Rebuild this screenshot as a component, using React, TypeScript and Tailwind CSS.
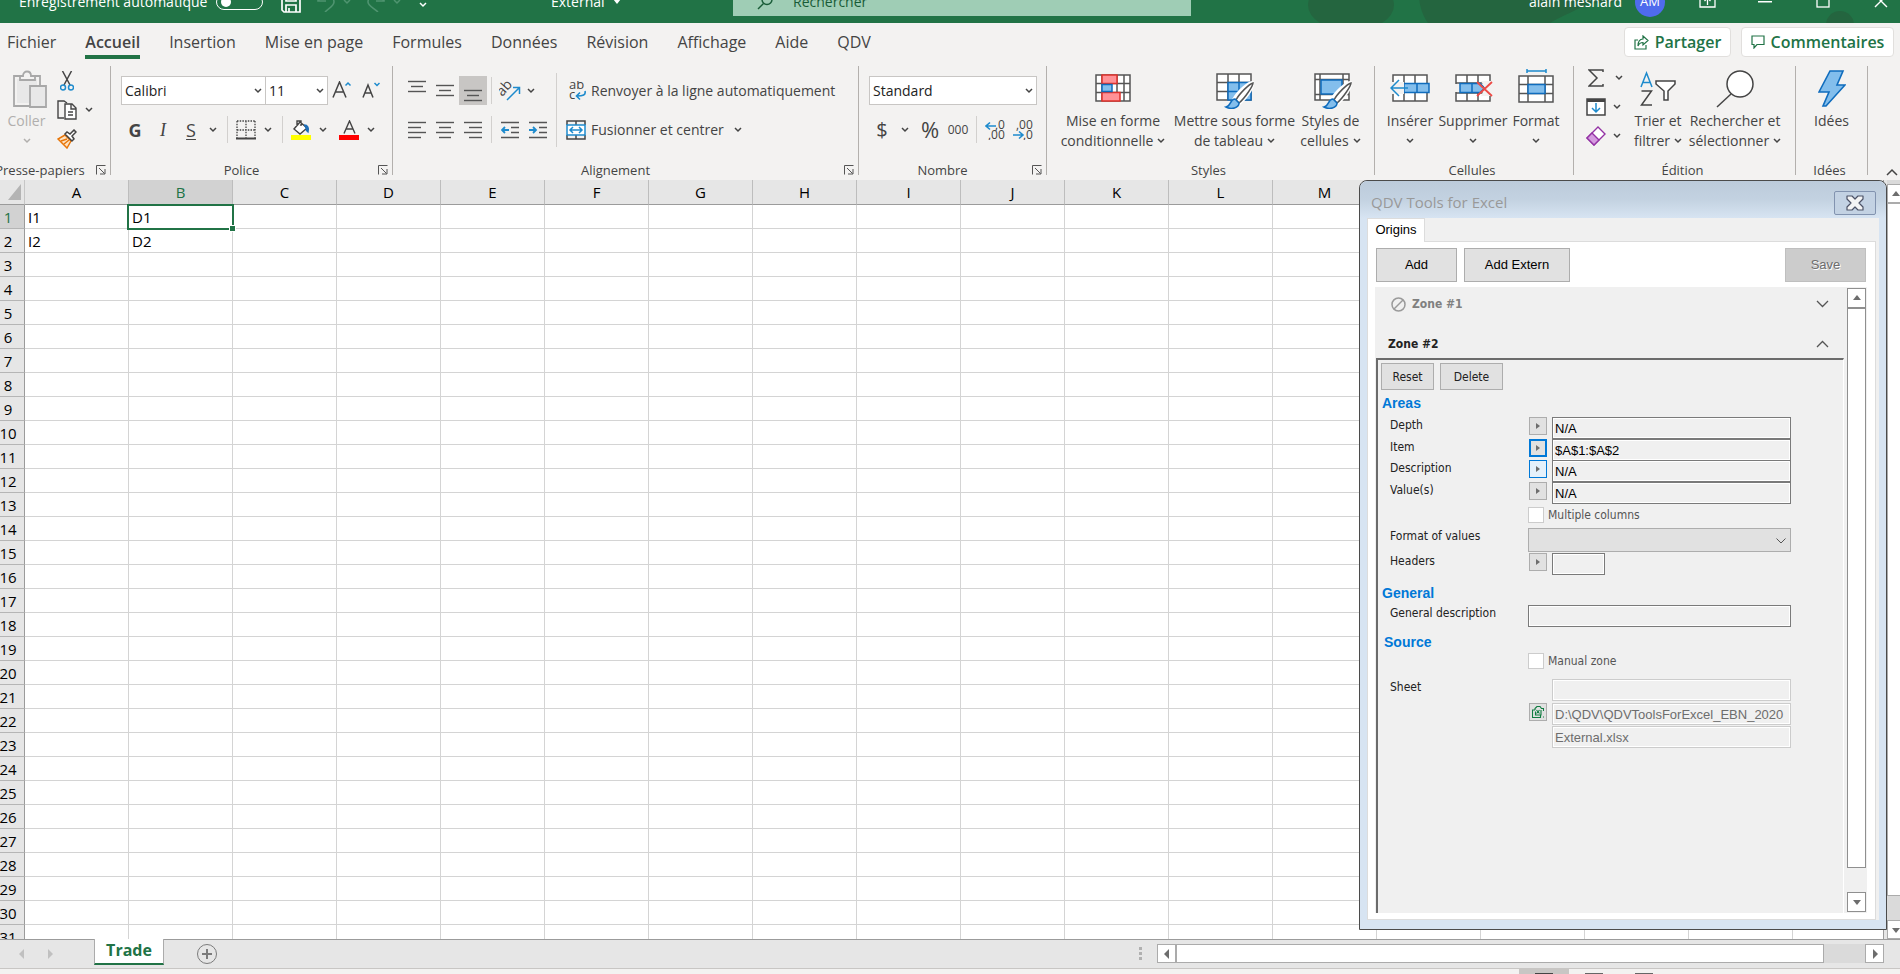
import { useState, type ReactNode } from 'react';
import clsx from 'clsx';

const COLUMNS = 'ABCDEFGHIJKLMNOPQR'.split('');
const ROWS = Array.from({ length: 31 }, (_, i) => i + 1);
const CELLS: Record<string, string> = { A1: 'I1', B1: 'D1', A2: 'I2', B2: 'D2' };
const TABS = [
  'Fichier',
  'Accueil',
  'Insertion',
  'Mise en page',
  'Formules',
  'Données',
  'Révision',
  'Affichage',
  'Aide',
  'QDV',
];

/* ---------- small building blocks ---------- */

function Chevron({ className = 'text-[#444]' }: { className?: string }) {
  return (
    <svg width="8" height="6" viewBox="0 0 8 6" fill="none" stroke="currentColor" strokeWidth="1.5" className={clsx('flex-none', className)}>
      <path d="M1 1l3 3 3-3" />
    </svg>
  );
}

function Triangle({ dir, className = 'fill-[#6d6d6d]' }: { dir: 'up' | 'down' | 'left' | 'right'; className?: string }) {
  const paths = { up: 'M5 2l4 5H1z', down: 'M1 3h8L5 8z', left: 'M7 0v10L2 5z', right: 'M3 0v10l5-5z' };
  return (
    <svg width="10" height="10" viewBox="0 0 10 10" className={clsx('flex-none', className)}>
      <path d={paths[dir]} />
    </svg>
  );
}

function Divider({ className = 'h-[27px]' }: { className?: string }) {
  return <div className={clsx('w-px flex-none bg-[#d2d0ce]', className)} />;
}

interface GroupProps {
  title: string;
  width: string;
  launcher?: boolean;
  children: ReactNode;
}

function Group({ title, width, launcher = false, children }: GroupProps) {
  return (
    <>
      <section className={clsx('flex h-[114px] flex-none flex-col', width)}>
        <div className="flex flex-1">{children}</div>
        <div className="flex h-5 items-center gap-[6px] pr-1 text-[13px] leading-4 text-[#444]">
          <span className="flex-1 text-center whitespace-nowrap">{title}</span>
          {launcher && (
            <button type="button" aria-label={title}>
              <svg width="10" height="10" viewBox="0 0 10 10" fill="none" stroke="#555">
                <path d="M.5 9.500V.5h9M3 3l5.500 5.500M9 4v5H4" />
              </svg>
            </button>
          )}
        </div>
      </section>
      <div className="h-[109px] w-px flex-none bg-[#b3b0ad]" />
    </>
  );
}

interface IconButtonProps {
  label: string;
  className?: string;
  children: ReactNode;
}

function IconButton({ label, className = 'h-[27px] w-7', children }: IconButtonProps) {
  return (
    <button type="button" aria-label={label} className={clsx('flex flex-none items-center justify-center', className)}>
      {children}
    </button>
  );
}

interface BigButtonProps {
  icon: ReactNode;
  lines: string[];
  width: string;
  chevron?: boolean;
  disabled?: boolean;
}

function BigButton({ icon, lines, width, chevron = true, disabled = false }: BigButtonProps) {
  return (
    <button
      type="button"
      disabled={disabled}
      className={clsx('flex flex-none flex-col items-center pt-1 text-sm leading-5', width, disabled ? 'text-[#b1afad]' : 'text-[#444]')}
    >
      <span className="mb-[3px] flex h-[38px] items-center">{icon}</span>
      <span className="whitespace-nowrap">{lines[0]}</span>
      <span className="flex min-h-5 items-center gap-1 whitespace-nowrap">
        {lines[1]}
        {chevron && <Chevron className="" />}
      </span>
    </button>
  );
}

interface ComboProps {
  label: string;
  value: string;
  width: string;
}

function Combo({ label, value, width }: ComboProps) {
  return (
    <div className={clsx('relative h-[29px] flex-none', width)}>
      <select aria-label={label} className="h-full w-full appearance-none border border-[#c8c6c4] bg-white pl-[3px] text-sm text-[#222]">
        <option>{value}</option>
      </select>
      <Chevron className="pointer-events-none absolute top-[12px] right-1 text-[#444]" />
    </div>
  );
}

function Lines({ rows, className }: { rows: [number, number][]; className?: string }) {
  return (
    <svg width="18" height="18" viewBox="0 0 18 18" className={clsx('stroke-[#555]', className)} strokeWidth="1.400">
      {rows.map(([x1, x2], i) => (
        <path key={i} d={`M${x1} ${1.5 + i * 5}H${x2}`} />
      ))}
    </svg>
  );
}

/* ---------- title bar ---------- */

function TitleBar() {
  const [autoSave, setAutoSave] = useState(false);
  return (
    <header className="relative -mt-5 flex h-[43px] flex-none items-center overflow-hidden bg-[#217346] text-sm text-white">
      <svg width="600" height="42" viewBox="0 0 600 42" className="absolute right-0 bottom-0 fill-[#24653f]">
        <ellipse cx="51" cy="24" rx="43" ry="26" />
        <path d="M120 0h230c-10 18-40 24-60 22-20 10-30 14-40 20H128C118 28 118 12 120 0z" />
        <circle cx="540" cy="44" r="14" />
      </svg>
      <div className="relative flex w-[733px] flex-none items-center pl-[19px]">
        <label htmlFor="autosave" className="w-[197px] whitespace-nowrap">
          Enregistrement automatique
        </label>
        <span className="relative flex h-4 w-[47px] items-center rounded-full border border-white">
          <input
            id="autosave"
            type="checkbox"
            checked={autoSave}
            onChange={(e) => setAutoSave(e.target.checked)}
            className="absolute inset-0 appearance-none"
          />
          <span className={clsx('h-[10px] w-[10px] rounded-full bg-white', autoSave ? 'ml-[31px]' : 'ml-[4px]')} />
        </span>
        <button type="button" aria-label="Enregistrer" className="mt-[3px] ml-[18px]">
          <svg width="20" height="20" viewBox="0 0 20 20" fill="none" stroke="white" strokeWidth="1.700">
            <path d="M1 1h16l2 2v16H3l-2-2zM5 1v7h10V1M5 19v-7h10v7M8 19v-4" />
          </svg>
        </button>
        <span className="ml-4 flex items-center gap-2 text-[#4f9470]">
          <svg width="18" height="20" viewBox="0 0 18 20" fill="none" stroke="currentColor" strokeWidth="1.600">
            <path d="M1 1v8h8M1 9c6-9 16-5 16 1 0 4-5 6-9 10" />
          </svg>
          <Chevron className="text-[#4f9470]" />
        </span>
        <span className="ml-4 flex items-center gap-2 text-[#4f9470]">
          <svg width="18" height="20" viewBox="0 0 18 20" fill="none" stroke="currentColor" strokeWidth="1.600">
            <path d="M17 1v8H9M17 9C11 0 1 4 1 10c0 4 6 6 10 10" />
          </svg>
          <Chevron className="text-[#4f9470]" />
        </span>
        <Chevron className="mt-[6px] ml-[18px] text-white" />
        <button type="button" className="ml-[124px] flex items-center gap-2">
          External
          <svg width="8" height="5" viewBox="0 0 8 5" className="fill-white">
            <path d="M0 0h8L4 5z" />
          </svg>
        </button>
      </div>
      <div className="relative flex h-[29px] w-[458px] flex-none items-center gap-5 bg-[#9fcdb5] pl-6 text-[#185c37]">
        <svg width="16" height="16" viewBox="0 0 16 16" fill="none" stroke="currentColor" strokeWidth="1.400">
          <circle cx="10" cy="5.500" r="5" />
          <path d="M6.500 9.500L1 15" />
        </svg>
        <input aria-label="Rechercher" placeholder="Rechercher" className="w-80 bg-transparent placeholder:text-[#185c37] outline-none" />
      </div>
      <div className="relative ml-auto flex flex-none items-center">
        <span className="mr-[13px]">alain mesnard</span>
        <span className="mr-[34px] flex h-[30px] w-[30px] items-center justify-center rounded-full bg-[#4f6bed] text-[13px]">AM</span>
        <button type="button" aria-label="Options du ruban" className="mr-[42px]">
          <svg width="17" height="12" viewBox="0 0 17 12" fill="none" stroke="white" strokeWidth="1.300">
            <path d="M1 0v11h15V0M8.500 9V2M5.500 5l3-3 3 3" />
          </svg>
        </button>
        <button type="button" aria-label="Réduire" className="mr-11">
          <svg width="14" height="2" className="fill-white">
            <rect width="14" height="1.500" />
          </svg>
        </button>
        <button type="button" aria-label="Agrandir" className="mr-11">
          <svg width="14" height="12" fill="none" stroke="white" strokeWidth="1.300">
            <rect x="1" y="-2" width="12" height="13" />
          </svg>
        </button>
        <button type="button" aria-label="Fermer" className="mr-3">
          <svg width="14" height="14" fill="none" stroke="white" strokeWidth="1.400">
            <path d="M1 0l12 12M13 0L1 12" />
          </svg>
        </button>
      </div>
    </header>
  );
}

/* ---------- ribbon ---------- */

function RibbonTabs() {
  const [active, setActive] = useState('Accueil');
  return (
    <nav className="flex h-[43px] flex-none items-start justify-between pr-[6px] pl-[7px]">
      <div className="flex gap-[29px]">
        {TABS.map((t) => (
          <button
            key={t}
            type="button"
            onClick={() => setActive(t)}
            className={clsx(
              'h-9 border-b-4 pt-[6px] text-base leading-6 whitespace-nowrap text-[#444]',
              t === active ? 'border-[#217346] font-semibold' : 'border-transparent',
            )}
          >
            {t}
          </button>
        ))}
      </div>
      <div className="flex gap-[10px] pt-1 text-base font-semibold text-[#217346]">
        <button type="button" className="flex h-[30px] w-[107px] items-center justify-center gap-[6px] rounded-sm border border-[#e1dfdd] bg-white">
          <svg width="15" height="15" viewBox="0 0 15 15" fill="none" stroke="currentColor" strokeWidth="1.200">
            <path d="M4 5H1v9h11v-4M9 1l5 4.500L9 10V7.500C6 7.500 5 8.500 4 11c0-4 1.500-7 5-7z" />
          </svg>
          Partager
        </button>
        <button type="button" className="flex h-[30px] w-[153px] items-center justify-center gap-[6px] rounded-sm border border-[#e1dfdd] bg-white">
          <svg width="14" height="14" viewBox="0 0 14 14" fill="none" stroke="currentColor" strokeWidth="1.200">
            <path d="M1 1h12v8.500H6L3 13V9.500H1z" />
          </svg>
          Commentaires
        </button>
      </div>
    </nav>
  );
}

function ClipboardGroup() {
  return (
    <Group title="Presse-papiers" width="-ml-[10px] w-[120px]" launcher>
      <div className="pl-[11px]">
        <BigButton
          disabled
          width="w-[51px]"
          lines={['Coller']}
          icon={
            <svg width="34" height="38" viewBox="0 0 34 38" fill="#e8e8e8" stroke="#a8a8a8" strokeWidth="1.800" className="ml-[6px]">
              <path d="M1 6h26v30H1z" fill="#f3f2f1" />
              <path d="M4 9h20v24H4z" stroke="none" />
              <path d="M7 10V6h3c0-6 8-6 8 0h4v4z" fill="#f3f2f1" />
              <path d="M17 16h16v21H17z" />
            </svg>
          }
        />
      </div>
      <div className="flex flex-col gap-[9px] pt-[5px] pl-[5px]">
        <IconButton label="Couper" className="h-5 w-5">
          <svg width="14" height="20" viewBox="0 0 14 20" fill="none" strokeWidth="1.500">
            <path d="M2.500 0L10 14M11.500 0L4 14" stroke="#444" />
            <circle cx="3" cy="16.500" r="2.500" stroke="#1e8bcd" />
            <circle cx="11" cy="16.500" r="2.500" stroke="#1e8bcd" />
          </svg>
        </IconButton>
        <div className="flex items-center gap-2">
          <IconButton label="Copier" className="h-5 w-5">
            <svg width="20" height="20" viewBox="0 0 20 20" fill="white" stroke="#444" strokeWidth="1.400">
              <path d="M7 18H1V1h6l3 2" fill="none" />
              <path d="M8 4h7l4 4v11H8zM14 4v5h5M11 12h5M11 15h5" />
            </svg>
          </IconButton>
          <Chevron />
        </div>
        <IconButton label="Reproduire la mise en forme" className="h-5 w-5">
          <svg width="20" height="20" viewBox="0 0 20 20" fill="none" strokeWidth="1.500">
            <path d="M8 6l-7 4 9 9 4-7z" fill="#fde3c3" stroke="#e8760a" />
            <path d="M4 12l6-2M7 15l5-4" stroke="#e8760a" />
            <path d="M8 5l7 7 2-2-2-3 4-4-2-2-4 4-3-2z" fill="white" stroke="#444" />
          </svg>
        </IconButton>
      </div>
    </Group>
  );
}

function FontGroup() {
  return (
    <Group title="Police" width="w-[281px]" launcher>
      <div className="flex flex-col gap-[11px] pt-[10px] pl-[10px]">
        <div className="flex items-center">
          <Combo label="Police" value="Calibri" width="w-[145px]" />
          <Combo label="Taille" value="11" width="-ml-px w-[63px]" />
          <IconButton label="Agrandir la police" className="ml-1 h-[27px] w-5">
            <svg width="20" height="20" viewBox="0 0 20 20" fill="none" strokeWidth="1.500">
              <path d="M1 16.500L7.500 1 14 16.500M3.500 11h8" stroke="#444" />
              <path d="M13.500 4.500L16 2 18.500 4.500" stroke="#1e8bcd" />
            </svg>
          </IconButton>
          <IconButton label="Réduire la police" className="ml-[10px] h-[27px] w-[18px]">
            <svg width="18" height="20" viewBox="0 0 18 20" fill="none" strokeWidth="1.500">
              <path d="M1 16.500L6 4l5 12.500M3 12h6" stroke="#444" />
              <path d="M12.500 2L15 4.500 17.500 2" stroke="#1e8bcd" />
            </svg>
          </IconButton>
        </div>
        <div className="flex items-center text-lg leading-6 text-[#444]">
          <IconButton label="Gras">
            <b>G</b>
          </IconButton>
          <IconButton label="Italique">
            <i className="font-['Liberation_Serif',serif]">I</i>
          </IconButton>
          <IconButton label="Souligné">
            <span className="underline underline-offset-2">S</span>
          </IconButton>
          <Chevron className="ml-1 text-[#444]" />
          <Divider className="mr-[6px] ml-[10px] h-[27px]" />
          <IconButton label="Bordures" className="h-[27px] w-6">
            <svg width="20" height="20" viewBox="0 0 20 20" fill="none" stroke="#444" strokeWidth="1.300">
              <path d="M1 1h18M1 10h18M1 1v17M10 1v17M19 1v17" strokeDasharray="1.500 1.200" />
              <path d="M0 18.500h20" strokeWidth="2" />
            </svg>
          </IconButton>
          <Chevron className="ml-[6px] text-[#444]" />
          <Divider className="mr-[6px] ml-[10px] h-[27px]" />
          <IconButton label="Remplissage" className="h-[27px] w-6">
            <svg width="20" height="20" viewBox="0 0 20 20" fill="none" strokeWidth="1.400">
              <path d="M9 2l-6 7 6 5 7-6zM6 6V1h4v5" stroke="#444" fill="white" />
              <path d="M13 5c4 0 5 3 4 7l-2-2" fill="#1e6fb8" stroke="#1e6fb8" />
              <path d="M0 15h20v5H0z" fill="#ffff00" />
            </svg>
          </IconButton>
          <Chevron className="ml-[6px] text-[#444]" />
          <IconButton label="Couleur de police" className="ml-[10px] h-[27px] w-6">
            <svg width="20" height="20" viewBox="0 0 20 20" fill="none" strokeWidth="1.400">
              <path d="M5 13.500L10.500 1 16 13.500M7 9h7" stroke="#444" />
              <path d="M0 15h20v5H0z" fill="#ff0000" />
            </svg>
          </IconButton>
          <Chevron className="ml-[6px] text-[#444]" />
        </div>
      </div>
    </Group>
  );
}

function AlignmentGroup() {
  return (
    <Group title="Alignement" width="w-[465px]" launcher>
      <div className="flex flex-col gap-[11px] pt-[10px] pl-[10px]">
        <div className="flex h-[29px] items-center">
          <IconButton label="Aligner en haut">
            <Lines rows={[[0, 18], [3, 15], [0, 18]]} className="mb-[3px] stroke-[#333]" />
          </IconButton>
          <IconButton label="Aligner au centre">
            <Lines rows={[[0, 18], [3, 15], [0, 18]]} className="mt-1 stroke-[#333]" />
          </IconButton>
          <IconButton label="Aligner en bas" className="h-[29px] w-7 bg-[#c8c6c4]">
            <Lines rows={[[0, 18], [3, 15], [0, 18]]} className="mt-[14px] stroke-[#333]" />
          </IconButton>
          <Divider className="mx-1 h-[27px]" />
          <IconButton label="Orientation">
            <svg width="22" height="22" viewBox="0 0 22 22" fill="none" strokeWidth="1.500">
              <text x="0" y="14" transform="rotate(-48 5 12)" fontSize="14" fill="#444">ab</text>
              <path d="M8 20L20 8M14 7.500h6.500V14" stroke="#1e8bcd" />
            </svg>
          </IconButton>
          <Chevron className="ml-[3px] text-[#444]" />
        </div>
        <div className="flex items-center">
          <IconButton label="Aligner à gauche">
            <Lines rows={[[0, 18], [0, 13], [0, 18], [0, 13]]} />
          </IconButton>
          <IconButton label="Centrer">
            <Lines rows={[[0, 18], [3, 15], [0, 18], [3, 15]]} />
          </IconButton>
          <IconButton label="Aligner à droite">
            <Lines rows={[[0, 18], [5, 18], [0, 18], [5, 18]]} />
          </IconButton>
          <Divider className="mx-1 h-[27px]" />
          <IconButton label="Diminuer le retrait">
            <svg width="18" height="18" viewBox="0 0 18 18" fill="none" stroke="#555" strokeWidth="1.500">
              <path d="M0 1.500h18M10 6.500h8M10 11.500h8M0 16.500h18" />
              <path d="M1 9h7M4 6L1 9l3 3" stroke="#1e8bcd" strokeWidth="1.800" />
            </svg>
          </IconButton>
          <IconButton label="Augmenter le retrait">
            <svg width="18" height="18" viewBox="0 0 18 18" fill="none" stroke="#555" strokeWidth="1.500">
              <path d="M0 1.500h18M10 6.500h8M10 11.500h8M0 16.500h18" />
              <path d="M0 9h7M4 6l3 3-3 3" stroke="#1e8bcd" strokeWidth="1.800" />
            </svg>
          </IconButton>
        </div>
      </div>
      <div className="pt-[7px] pl-1">
        <Divider className="h-[74px]" />
      </div>
      <div className="flex flex-col gap-[11px] pt-[10px] pl-[9px] text-sm text-[#444]">
        <button type="button" className="flex h-[29px] items-center gap-[5px] whitespace-nowrap">
          <svg width="20" height="20" viewBox="0 0 20 20" fill="none" strokeWidth="1.600">
            <text x="3" y="8" fontSize="13" fill="#444">ab</text>
            <text x="3" y="18" fontSize="13" fill="#444">c</text>
            <path d="M19 10c1 4-2 5-8 5M14 11.500L10.500 15l3.500 3.500" stroke="#1e8bcd" />
          </svg>
          Renvoyer à la ligne automatiquement
        </button>
        <button type="button" className="flex h-[27px] items-center gap-[5px] whitespace-nowrap">
          <svg width="20" height="20" viewBox="0 0 20 20" fill="none" stroke="#444" strokeWidth="1.500">
            <path d="M1 5V1h18v4M1 15v4h18v-4M10 1v4M10 15v4" />
            <path d="M1 5h18v10H1z" fill="#fff" stroke="#1e8bcd" />
            <path d="M4 10h12M7 7l-3 3 3 3M13 7l3 3-3 3" stroke="#1e8bcd" />
          </svg>
          <span className="mr-[5px]">Fusionner et centrer</span>
          <Chevron />
        </button>
      </div>
    </Group>
  );
}

function NumberGroup() {
  return (
    <Group title="Nombre" width="w-[187px]" launcher>
      <div className="flex flex-col gap-[11px] pt-[10px] pl-[10px]">
        <Combo label="Format de nombre" value="Standard" width="w-[168px]" />
        <div className="flex items-center text-[#444]">
          <IconButton label="Comptabilité" className="h-[27px] w-[26px] text-xl">$</IconButton>
          <Chevron className="ml-[6px] text-[#444]" />
          <IconButton label="Pourcentage" className="ml-[9px] h-[27px] w-6 text-[22px]">%</IconButton>
          <IconButton label="Séparateur de milliers" className="ml-1 h-[27px] w-6 text-xs">000</IconButton>
          <Divider className="mr-[6px] ml-[6px] h-[27px]" />
          <IconButton label="Ajouter une décimale" className="h-[27px] w-6">
            <svg width="20" height="20" viewBox="0 0 20 20" fill="none" strokeWidth="1.600">
              <text x="10" y="9" fontSize="12" fill="#444">,0</text>
              <text x="3" y="19" fontSize="12" fill="#444">,00</text>
              <path d="M1 6h10M5 2.500L1 6l4 3.500" stroke="#1e8bcd" />
            </svg>
          </IconButton>
          <IconButton label="Réduire les décimales" className="ml-1 h-[27px] w-6">
            <svg width="20" height="20" viewBox="0 0 20 20" fill="none" strokeWidth="1.600">
              <text x="3" y="9" fontSize="12" fill="#444">,00</text>
              <text x="10" y="19" fontSize="12" fill="#444">,0</text>
              <path d="M0 15h10M6 11.500l4 3.500-4 3.500" stroke="#1e8bcd" />
            </svg>
          </IconButton>
        </div>
      </div>
    </Group>
  );
}

function BrushShape() {
  return (
    <>
      <path d="M36 10c-3 0-14 9-18 17l4 4c7-5 15-17 14-21z" fill="white" stroke="white" strokeWidth="4" />
      <path d="M37 10c-4 1-14 11-17 17l3 3c6-5 14-17 14-20z" fill="white" stroke="#555" />
      <path d="M19 26c-5 0-4 7-9 8 5 3 13 1 13-4z" fill="#83beec" stroke="#0f6cbd" />
    </>
  );
}

function StylesGroup() {
  return (
    <Group title="Styles" width="w-[327px]">
      <div className="flex pl-[7px]">
        <BigButton
          width="w-[118px]"
          lines={['Mise en forme', 'conditionnelle']}
          icon={
            <svg width="36" height="28" viewBox="0 0 36 28" fill="none" stroke="#555" strokeWidth="1.500" className="mb-0.5">
              <path d="M1 1h34v26H1zM1 9.500h34M1 18.500h34M7 1v26M22 1v26M29 1v26" fill="white" />
              <path d="M7 1h15v8.500H7zM7 18.500h18V27H7z" fill="#ff9196" stroke="#e0322d" />
              <path d="M7 10.500h10v7H7z" fill="#83beec" stroke="#0f6cbd" />
            </svg>
          }
        />
        <BigButton
          width="w-[125px]"
          lines={['Mettre sous forme', 'de tableau']}
          icon={
            <svg width="38" height="36" viewBox="0 0 38 36" fill="none" stroke="#555" strokeWidth="1.500" className="mt-1">
              <path d="M1 1h34v26H1zM1 9.500h34M1 18.500h34M12 1v26M23 1v26" fill="white" />
              <path d="M12 9.500h23V27H12z" fill="#83beec" stroke="#0f6cbd" />
              <path d="M12 18.500h23M23 9.500V27" stroke="#0f6cbd" />
              <BrushShape />
            </svg>
          }
        />
        <BigButton
          width="w-[67px]"
          lines={['Styles de', 'cellules']}
          icon={
            <svg width="38" height="36" viewBox="0 0 38 36" fill="none" stroke="#555" strokeWidth="1.500" className="mt-1 ml-1">
              <path d="M1 1h34v26H1zM1 6.500h34M1 21.500h34M6 1v26M29 1v26" fill="white" />
              <path d="M7 7h21v14H7z" fill="#83beec" stroke="#0f6cbd" />
              <BrushShape />
            </svg>
          }
        />
      </div>
    </Group>
  );
}

function CellsGroup() {
  return (
    <Group title="Cellules" width="w-[198px]">
      <div className="flex pl-[8px]">
        <BigButton
          width="w-[54px]"
          lines={['Insérer']}
          icon={
            <svg width="40" height="28" viewBox="0 0 40 28" fill="none" stroke="#555" strokeWidth="1.500" className="mb-0.5">
              <path d="M3 1h34v26H3zM14 1v26M25 1v26" fill="white" />
              <path d="M14 9.500h25v9H14zM27 9.500v9" fill="#83beec" stroke="#0f6cbd" />
              <path d="M0 8h14v12H0z" fill="#f3f2f1" stroke="none" />
              <path d="M1 14h17M9 6l-8 8 8 8" stroke="#1e8bcd" />
            </svg>
          }
        />
        <BigButton
          width="w-[72px]"
          lines={['Supprimer']}
          icon={
            <svg width="40" height="28" viewBox="0 0 40 28" fill="none" stroke="#555" strokeWidth="1.500" className="mb-0.5 ml-1">
              <path d="M1 1h34v26H1zM1 9h34M1 19h34M12 1v26M23 1v26" fill="white" />
              <path d="M0 10h6v8H0z" fill="#f3f2f1" stroke="none" />
              <path d="M5 9.500h20l5 4.500-5 4.500H5zM17 9.500v9" fill="#83beec" stroke="#0f6cbd" />
              <path d="M26 7h11v15H26l4-8z" fill="#f3f2f1" stroke="none" />
              <path d="M22 8l15 14M37 8L22 22" stroke="#ee4a45" strokeWidth="1.800" />
            </svg>
          }
        />
        <BigButton
          width="w-[54px]"
          lines={['Format']}
          icon={
            <svg width="36" height="36" viewBox="0 0 36 36" fill="none" stroke="#555" strokeWidth="1.500" className="mb-[6px]">
              <path d="M1 8h34v26H1zM1 16.500h34M1 25.500h34M10 8v26M27 8v26" fill="white" />
              <path d="M10 16.500h17v9H10z" fill="#83beec" stroke="#0f6cbd" />
              <path d="M9 3h19M9 1v4M28 1v4" stroke="#1e8bcd" />
            </svg>
          }
        />
      </div>
    </Group>
  );
}

function EditingGroup() {
  return (
    <Group title="Édition" width="w-[221px]">
      <div className="flex flex-col gap-[9px] pt-[2px] pl-3">
        <div className="flex items-center gap-[9px]">
          <IconButton label="Somme automatique" className="h-5 w-5">
            <svg width="16" height="18" viewBox="0 0 16 18" fill="none" stroke="#444" strokeWidth="1.500">
              <path d="M15 3V1H1l8 8-8 8h14v-2" />
            </svg>
          </IconButton>
          <Chevron />
        </div>
        <div className="flex items-center gap-[7px]">
          <IconButton label="Recopier" className="h-5 w-5">
            <svg width="20" height="18" viewBox="0 0 20 18" fill="none" stroke="#444" strokeWidth="1.500">
              <path d="M1 1h18v16H1z" fill="white" />
              <path d="M1 2.500h18" strokeWidth="3" />
              <path d="M10 5v9M6 10l4 4 4-4" stroke="#1e8bcd" />
            </svg>
          </IconButton>
          <Chevron />
        </div>
        <div className="flex items-center gap-[7px]">
          <IconButton label="Effacer" className="h-5 w-5">
            <svg width="20" height="20" viewBox="0 0 20 20" fill="white" stroke="#9332a4" strokeWidth="1.400">
              <path d="M12 1l7 7L8 19l-7-7z" />
              <path d="M6 7l7 7-5 5-7-7z" fill="#d59be0" />
            </svg>
          </IconButton>
          <Chevron />
        </div>
      </div>
      <div className="flex pl-2">
        <BigButton
          width="w-[54px]"
          lines={['Trier et', 'filtrer']}
          icon={
            <svg width="36" height="36" viewBox="0 0 36 36" fill="none" stroke="#444" strokeWidth="1.500">
              <path d="M1 16L6.500 2 12 16M3 11.500h7" stroke="#1e8bcd" />
              <path d="M1.500 20h10L1.500 34H12" />
              <path d="M16 10h19v3l-7 7v9h-4v-9l-8-7z" fill="white" />
            </svg>
          }
        />
        <BigButton
          width="w-[100px]"
          lines={['Rechercher et', 'sélectionner']}
          icon={
            <svg width="38" height="38" viewBox="0 0 38 38" fill="white" stroke="#444" strokeWidth="1.500">
              <circle cx="24" cy="14" r="13" />
              <path d="M15 24L1 37" />
            </svg>
          }
        />
      </div>
    </Group>
  );
}

function Ribbon() {
  return (
    <div className="flex h-[114px] flex-none justify-between">
      <div className="flex">
        <ClipboardGroup />
        <FontGroup />
        <AlignmentGroup />
        <NumberGroup />
        <StylesGroup />
        <CellsGroup />
        <EditingGroup />
        <Group title="Idées" width="w-[71px]">
          <BigButton
            width="w-[71px]"
            chevron={false}
            lines={['Idées']}
            icon={
              <svg width="28" height="38" viewBox="0 0 28 38" fill="#83beec" stroke="#0f6cbd" strokeWidth="1.600">
                <path d="M12 1h13l-6 14h8L8 36H5l6-14H1z" />
              </svg>
            }
          />
        </Group>
      </div>
      <button type="button" aria-label="Réduire le ruban" className="mt-[100px] mr-[2px] h-3">
        <svg width="12" height="8" viewBox="0 0 12 8" fill="none" stroke="#444" strokeWidth="1.500">
          <path d="M1 7l5-5 5 5" />
        </svg>
      </button>
    </div>
  );
}

/* ---------- sheet ---------- */

function Sheet() {
  return (
    <div className="min-w-0 flex-1 overflow-hidden border-r border-[#9b9b9b] bg-white">
      <table className="w-[1897px] table-fixed border-separate border-spacing-0 text-[15px] leading-5 text-black">
        <colgroup>
          <col className="w-[25px]" />
          {COLUMNS.map((c) => (
            <col key={c} className="w-[104px]" />
          ))}
        </colgroup>
        <thead>
          <tr className="h-[25px]">
            <th className="border-r border-b border-[#9b9b9b] border-r-[#c6c6c6] bg-[#e6e6e6] p-0">
              <svg width="13" height="16" viewBox="0 0 13 16" className="ml-auto mr-[3px] fill-[#b4b4b4]">
                <path d="M13 0v16H0z" />
              </svg>
            </th>
            {COLUMNS.map((c) => (
              <th
                key={c}
                className={clsx(
                  'border-r border-b border-[#9b9b9b] border-r-[#bdbdbd] p-0 font-normal',
                  c === 'B' ? 'bg-[#d2d2d2] text-[#217346]' : 'bg-[#e6e6e6]',
                )}
              >
                {c}
              </th>
            ))}
          </tr>
        </thead>
        <tbody>
          {ROWS.map((r) => (
            <tr key={r} className="h-6">
              <th
                className={clsx(
                  'border-r border-b border-[#9b9b9b] border-b-[#b5b5b5] p-0 font-normal',
                  r === 1 ? 'bg-[#d2d2d2] text-[#217346]' : 'bg-[#e6e6e6]',
                )}
              >
                <span className="flex justify-center pr-2">{r}</span>
              </th>
              {COLUMNS.map((c) => (
                <td key={c} className="relative border-r border-b border-[#d4d4d4] p-0 pl-[3px]">
                  {CELLS[c + r]}
                  {c + r === 'B1' && (
                    <span className="absolute -top-px -right-0.5 -bottom-0.5 -left-0.5 z-10 border-2 border-[#217346]">
                      <span className="absolute -right-[3px] -bottom-[3px] h-[5px] w-[5px] bg-[#217346] outline outline-white" />
                    </span>
                  )}
                </td>
              ))}
            </tr>
          ))}
        </tbody>
      </table>
    </div>
  );
}

function SheetScrollbar() {
  return (
    <div className="ml-[3px] flex w-[13px] flex-none flex-col overflow-hidden bg-[#dadada] pt-1">
      <button type="button" aria-label="Défiler vers le haut" className="flex h-[19px] w-[18px] items-center justify-center border border-[#ababab] bg-white">
        <Triangle dir="up" />
      </button>
      <div className="w-[18px] flex-1 border border-[#ababab] bg-white" />
      <div className="h-6" />
      <button type="button" aria-label="Défiler vers le bas" className="flex h-[19px] w-[18px] items-center justify-center border border-[#ababab] bg-white">
        <Triangle dir="down" />
      </button>
    </div>
  );
}

function SheetTabs() {
  return (
    <footer className="flex-none">
      <div className="flex h-[29px] items-start border-t border-[#9b9b9b] bg-[#e6e6e6]">
        <div className="flex h-7 w-[94px] items-center gap-[18px] pl-[17px]">
          <Triangle dir="left" className="fill-[#c0c0c0]" />
          <Triangle dir="right" className="fill-[#c0c0c0]" />
        </div>
        <button type="button" className="-mt-px h-[26px] w-[70px] border-x border-b-2 border-[#ababab] border-b-[#217346] bg-white pb-0.5 text-base leading-5 font-bold text-[#217346]">
          Trade
        </button>
        <button type="button" aria-label="Nouvelle feuille" className="mt-1 ml-[33px]">
          <svg width="20" height="20" viewBox="0 0 20 20" fill="none" stroke="#7b7b7b">
            <circle cx="10" cy="10" r="9.500" />
            <path d="M10 5v10M5 10h10" strokeWidth="2" />
          </svg>
        </button>
        <div className="mt-1 ml-auto flex h-[19px] pr-4">
          <div className="mr-[15px] flex flex-col justify-center gap-0.5">
            <span className="h-[3px] w-[3px] bg-[#b0b0b0]" />
            <span className="h-[3px] w-[3px] bg-[#b0b0b0]" />
            <span className="h-[3px] w-[3px] bg-[#b0b0b0]" />
          </div>
          <button type="button" aria-label="Défiler à gauche" className="flex w-[19px] items-center justify-center border border-[#ababab] bg-white">
            <Triangle dir="left" />
          </button>
          <div className="w-[648px] border border-[#ababab] bg-white" />
          <div className="w-[41px] bg-[#dadada]" />
          <button type="button" aria-label="Défiler à droite" className="flex w-[19px] items-center justify-center border border-[#ababab] bg-white">
            <Triangle dir="right" />
          </button>
        </div>
      </div>
      <div className="flex h-[6px] items-end justify-end border-t border-[#c8c6c4] bg-[#f3f2f1] pr-[247px]">
        <span className="flex h-[5px] w-[50px] items-end justify-center bg-[#c8c6c4]">
          <span className="h-px w-[18px] bg-[#444]" />
        </span>
        <span className="ml-4 h-px w-[18px] bg-[#666]" />
        <span className="ml-8 h-px w-[18px] bg-[#666]" />
      </div>
    </footer>
  );
}

/* ---------- QDV dialog ---------- */

function PickButton({ label, state = 'normal' }: { label: string; state?: 'normal' | 'focus' | 'hover' }) {
  return (
    <button
      type="button"
      aria-label={label}
      className={clsx(
        'mr-[5px] ml-px flex h-[18px] w-[18px] flex-none items-center justify-center',
        state === 'normal' && 'border border-[#adadad] bg-[#e1e1e1]',
        state === 'focus' && 'border-2 border-[#0078d7] bg-[#e1e1e1]',
        state === 'hover' && 'border border-[#0078d7] bg-[#e5f1fb]',
      )}
    >
      <svg width="4" height="6" className="fill-[#6d6d6d]">
        <path d="M0 0l4 3-4 3z" />
      </svg>
    </button>
  );
}

const fieldBase = "h-[22px] border bg-[#f0f0f0] p-0 pl-0.5 font-['Liberation_Sans',Arial,sans-serif] text-[13px] leading-4 shadow-[inset_0_0_0_1px_#fff]";
const field = `${fieldBase} border-[#7a7a7a] text-black`;
const fieldDisabled = `${fieldBase} border-[#cccccc] text-[#6d6d6d]`;

interface FormRowProps {
  id?: string;
  label?: string;
  className?: string;
  children: ReactNode;
}

function FormRow({ id, label, className, children }: FormRowProps) {
  return (
    <div className={clsx('flex', className)}>
      <label htmlFor={id} className="w-[150px] flex-none pl-3 leading-4">
        {label}
      </label>
      <div className="flex flex-1">{children}</div>
    </div>
  );
}

function CheckRow({ id, label }: { id: string; label: string }) {
  const [checked, setChecked] = useState(false);
  return (
    <div className="flex h-5 items-center gap-1 pl-[150px] text-[#555]">
      <input
        id={id}
        type="checkbox"
        checked={checked}
        onChange={(e) => setChecked(e.target.checked)}
        className="h-4 w-4 appearance-none border border-[#cccccc] bg-white checked:bg-[#0078d7]"
      />
      <label htmlFor={id}>{label}</label>
    </div>
  );
}

function Heading({ children, className }: { children: string; className?: string }) {
  return (
    <h3 className={clsx("pl-1 font-['Liberation_Sans',Arial,sans-serif] text-sm leading-[18px] font-bold text-[#0078d7]", className)}>
      {children}
    </h3>
  );
}

function ZoneForm() {
  return (
    <div className="mr-[3px] flex-1 border-t-2 border-r border-l-2 border-[#6b6b6b] border-r-white pt-[3px]">
      <div className="flex gap-[6px] pl-[3px]">
        <button type="button" className="h-[27px] w-[53px] border border-[#adadad] bg-[#e1e1e1]">Reset</button>
        <button type="button" className="h-[27px] w-[63px] border border-[#adadad] bg-[#e1e1e1]">Delete</button>
      </div>
      <Heading className="mt-1 mb-[5px]">Areas</Heading>
      <FormRow id="depth" label="Depth">
        <PickButton label="Depth" />
        <input id="depth" defaultValue="N/A" className={clsx(field, 'w-[239px]')} />
      </FormRow>
      <FormRow id="item" label="Item">
        <PickButton label="Item" state="focus" />
        <input id="item" defaultValue="$A$1:$A$2" className={clsx(field, 'w-[239px]')} />
      </FormRow>
      <FormRow id="description" label="Description" className="-mt-px">
        <PickButton label="Description" state="hover" />
        <input id="description" defaultValue="N/A" className={clsx(field, 'w-[239px]')} />
      </FormRow>
      <FormRow id="values" label="Value(s)">
        <PickButton label="Value(s)" />
        <input id="values" defaultValue="N/A" className={clsx(field, 'w-[239px]')} />
      </FormRow>
      <div className="mt-px">
        <CheckRow id="multiple" label="Multiple columns" />
      </div>
      <FormRow id="format" label="Format of values" className="mt-[3px]">
        <div className="relative h-6 w-[263px]">
          <select id="format" className="h-full w-full appearance-none border border-[#adadad] bg-[#e1e1e1]">
            <option></option>
          </select>
          <svg width="10" height="6" viewBox="0 0 10 6" fill="none" stroke="#555" className="pointer-events-none absolute top-[10px] right-[5px]">
            <path d="M.5.5L5 5 9.500.5" />
          </svg>
        </div>
      </FormRow>
      <FormRow id="headers" label="Headers" className="mt-px">
        <PickButton label="Headers" />
        <input id="headers" className={clsx(field, 'w-[53px]')} />
      </FormRow>
      <Heading className="mt-[9px]">General</Heading>
      <FormRow id="general" label="General description" className="mt-[3px]">
        <input id="general" className={clsx(field, 'w-[263px]')} />
      </FormRow>
      <Heading className="mt-[6px] ml-[2px]">Source</Heading>
      <CheckRow id="manual" label="Manual zone" />
      <FormRow id="sheet" label="Sheet" className="mt-2">
        <input id="sheet" disabled className={clsx(fieldDisabled, 'ml-6 w-[239px]')} />
      </FormRow>
      <FormRow className="mt-0.5">
        <button type="button" aria-label="Path" className="mr-[5px] ml-px flex h-[18px] w-[18px] flex-none items-center justify-center border border-[#adadad] bg-[#e1e1e1]">
          <svg width="12" height="12" viewBox="0 0 12 12" fill="none" stroke="#107c41" strokeWidth="1.100">
            <path d="M3 4H.500v7.500h8V9M3 4V2.500L5 .5h3l1.500 2h2V5M9 4v5H3.500V5.500M4.500 4l3 3.500M7.500 4l-3 3.500M11.500 10.500v1" />
          </svg>
        </button>
        <input aria-label="Folder" disabled defaultValue="D:\QDV\QDVToolsForExcel_EBN_2020" className={clsx(fieldDisabled, 'w-[239px]')} />
      </FormRow>
      <FormRow className="mt-px">
        <input aria-label="File" disabled defaultValue="External.xlsx" className={clsx(fieldDisabled, 'ml-6 w-[239px]')} />
      </FormRow>
    </div>
  );
}

function QdvDialog() {
  const winButton = "border font-['Liberation_Sans',Arial,sans-serif] text-[13px]";
  return (
    <div
      role="dialog"
      aria-label="QDV Tools for Excel"
      className="absolute top-0 right-[13px] bottom-[9px] z-20 flex w-[528px] flex-col rounded-t-lg border border-[#4b4b4b] bg-[#d7e4f2] px-[7px] pb-[9px]"
    >
      <div className="-mx-[7px] flex h-[37px] flex-none items-center justify-between rounded-t-lg bg-linear-to-b from-[#bccbdb] via-[#c3d2e1] to-[#d7e4f2] pt-0.5 pr-[10px] pl-[11px] text-[15px] text-[#999]">
        <span className="pt-1">QDV Tools for Excel</span>
        <button type="button" aria-label="Fermer" className="mt-[9px] mb-1 flex h-6 w-[42px] items-center justify-center rounded-xs border border-[#8293af] bg-[#c3d2e3]">
          <svg width="18" height="16" viewBox="0 0 18 16">
            <path d="M1 1h5l3 3 3-3h5v3l-4 4 4 4v3h-5l-3-3-3 3H1v-3l4-4-4-4z" fill="#f4f4f4" stroke="#4c5266" strokeWidth="1.200" strokeLinejoin="round" />
          </svg>
        </button>
      </div>
      <div className="flex min-h-0 flex-1 flex-col bg-[#f0f0f0] pr-[3px]">
        <div className="flex h-[24px] flex-none items-end border-b border-[#dcdcdc]">
          <button type="button" className="-mb-px h-6 w-[58px] border-x border-t border-[#dcdcdc] bg-white pb-0.5 font-['Liberation_Sans',Arial,sans-serif] text-[13px]">
            Origins
          </button>
        </div>
        <div className="flex min-h-0 flex-1 flex-col border-x border-b border-[#dcdcdc] bg-white pt-[6px] pr-[8px] pb-[6px] pl-[7px]">
          <div className="mb-[5px] flex gap-[7px] pr-px pl-px">
            <button type="button" className={clsx(winButton, 'h-[34px] w-[81px] border-[#adadad] bg-[#e1e1e1]')}>Add</button>
            <button type="button" className={clsx(winButton, 'h-[34px] w-[106px] border-[#adadad] bg-[#e1e1e1]')}>Add Extern</button>
            <button
              type="button"
              disabled
              className={clsx(winButton, 'ml-auto h-[34px] w-[81px] border-[#bfbfbf] bg-[#cccccc] text-[#6d6d6d] [text-shadow:1px_1px_0_#fff]')}
            >
              Save
            </button>
          </div>
          <div className="flex min-h-0 flex-1 bg-[#f0f0f0] pl-px font-['DejaVu_Sans_Condensed','DejaVu_Sans',sans-serif] text-xs text-[#222]">
            <div className="flex flex-1 flex-col">
              <button type="button" className="flex h-[34px] items-center pr-[18px] pl-[15px] font-bold text-[#808080]">
                <svg width="15" height="15" viewBox="0 0 15 15" fill="none" stroke="#9a9a9a" strokeWidth="1.500" className="mr-[6px]">
                  <circle cx="7.500" cy="7.500" r="6.500" />
                  <path d="M12 3l-9 9" />
                </svg>
                Zone #1
                <svg width="13" height="8" viewBox="0 0 13 8" fill="none" stroke="#555" strokeWidth="1.300" className="ml-auto">
                  <path d="M1 1l5.500 5.500L12 1" />
                </svg>
              </button>
              <button type="button" className="flex h-[37px] items-end pr-[18px] pb-[6px] pl-3 font-bold text-[#222]">
                Zone #2
                <svg width="13" height="8" viewBox="0 0 13 8" fill="none" stroke="#555" strokeWidth="1.300" className="mb-1 ml-auto">
                  <path d="M1 7l5.500-5.500L12 7" />
                </svg>
              </button>
              <ZoneForm />
            </div>
            <div className="flex w-[20px] flex-col py-px pr-px">
              <button type="button" aria-label="Défiler" className="flex h-5 items-center justify-center border border-[#8f8f8f] bg-white">
                <Triangle dir="up" />
              </button>
              <div className="flex-1 border border-[#8f8f8f] bg-white" />
              <div className="h-6" />
              <button type="button" aria-label="Défiler" className="flex h-5 items-center justify-center border border-[#8f8f8f] bg-white">
                <Triangle dir="down" />
              </button>
            </div>
          </div>
        </div>
      </div>
    </div>
  );
}

export default function App() {
  return (
    <div className="flex h-screen flex-col overflow-hidden bg-[#f3f2f1] font-['Segoe_UI','Open_Sans','Noto_Sans',sans-serif]">
      <TitleBar />
      <RibbonTabs />
      <Ribbon />
      <main className="relative flex min-h-0 flex-1 bg-[#e6e6e6]">
        <Sheet />
        <SheetScrollbar />
        <QdvDialog />
      </main>
      <SheetTabs />
    </div>
  );
}
